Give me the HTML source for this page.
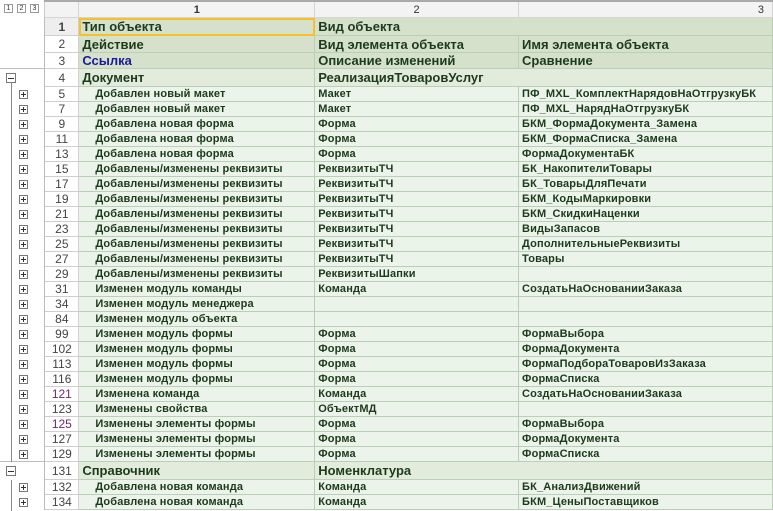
<!DOCTYPE html><html><head><meta charset="utf-8"><style>
body{margin:0;width:773px;height:511px;overflow:hidden;background:#fff;font-family:"Liberation Sans",Arial,sans-serif;position:relative}
table{border-collapse:collapse;table-layout:fixed;position:absolute;left:0;top:0}
td{padding:0;white-space:nowrap;overflow:hidden;color:#1c3b1c;border:1px solid #b9cfb6}
td.o{border:none;border-right:1px solid #bdbdbd;background:#fff;position:relative}
td.n{text-align:center;color:#444;font-size:12px;border:1px solid #cfcfcf;background:#fff}
tr.h td.c{background:#d6e1cc;font-size:13px;font-weight:bold;padding-left:3px}
tr.g td.c{background:#e3ecdc;font-size:13px;font-weight:bold;padding-left:3px}
tr.d td.c{background:#ecf3ea;font-size:11px;font-weight:bold;padding-left:3px;letter-spacing:0.15px}
tr.d td.c1{padding-left:16px}
tr.hd td{background:#f3f3f3;border:1px solid #d5d5d5;border-top:2px solid #aaa;text-align:center;font-size:11px;color:#333;height:15px}
.p{position:absolute;left:19px;top:3px;width:9px;height:9px;border:1px solid #777;background:#fff;box-sizing:border-box}
.p:before{content:"";position:absolute;left:1px;top:3px;width:5px;height:1px;background:#333}
.p:after{content:"";position:absolute;left:3px;top:1px;width:1px;height:5px;background:#333}
.m{position:absolute;left:6px;top:4px;width:10px;height:10px;border:1px solid #777;background:#fff;box-sizing:border-box}
.m:before{content:"";position:absolute;left:1px;top:3.5px;width:6px;height:1px;background:#333}
.vl{position:absolute;left:11px;width:1px;background:#888}
.lv{position:absolute;top:4px;width:9px;height:9px;border:1px solid #999;font-size:7px;line-height:8px;text-align:center;color:#333;box-sizing:border-box;background:#fff}
</style></head><body>
<table>
<colgroup><col style="width:45px"><col style="width:34px"><col style="width:236px"><col style="width:204px"><col style="width:254px"></colgroup>
<tr class="hd"><td style="border:none;border-right:1px solid #ccc;background:#fff"></td><td style="border-left:none"></td><td style="font-weight:bold">1</td><td>2</td><td style="text-align:right;padding-right:8px">3</td></tr>
<tr class="h" style="height:18px"><td class="o"></td><td class="n" style="font-weight:bold;background:#eee">1</td><td class="c" style="outline:2px solid #f5c02a;outline-offset:-2px">Тип объекта</td><td class="c" colspan="2">Вид объекта</td></tr>
<tr class="h" style="height:17px"><td class="o"></td><td class="n">2</td><td class="c">Действие</td><td class="c">Вид элемента объекта</td><td class="c">Имя элемента объекта</td></tr>
<tr class="h" style="height:16px"><td class="o"></td><td class="n">3</td><td class="c" style="color:#1a1a9a">Ссылка</td><td class="c">Описание изменений</td><td class="c">Сравнение</td></tr>
<tr class="g" style="height:18px"><td class="o" style="border-top:1px solid #bdbdbd"><span class="m"></span></td><td class="n">4</td><td class="c">Документ</td><td class="c" colspan="2">РеализацияТоваровУслуг</td></tr>
<tr class="d" style="height:15px"><td class="o"><span class="p"></span></td><td class="n">5</td><td class="c c1">Добавлен новый макет</td><td class="c">Макет</td><td class="c">ПФ_MXL_КомплектНарядовНаОтгрузкуБК</td></tr>
<tr class="d" style="height:15px"><td class="o"><span class="p"></span></td><td class="n">7</td><td class="c c1">Добавлен новый макет</td><td class="c">Макет</td><td class="c">ПФ_MXL_НарядНаОтгрузкуБК</td></tr>
<tr class="d" style="height:15px"><td class="o"><span class="p"></span></td><td class="n">9</td><td class="c c1">Добавлена новая форма</td><td class="c">Форма</td><td class="c">БКМ_ФормаДокумента_Замена</td></tr>
<tr class="d" style="height:15px"><td class="o"><span class="p"></span></td><td class="n">11</td><td class="c c1">Добавлена новая форма</td><td class="c">Форма</td><td class="c">БКМ_ФормаСписка_Замена</td></tr>
<tr class="d" style="height:15px"><td class="o"><span class="p"></span></td><td class="n">13</td><td class="c c1">Добавлена новая форма</td><td class="c">Форма</td><td class="c">ФормаДокументаБК</td></tr>
<tr class="d" style="height:15px"><td class="o"><span class="p"></span></td><td class="n">15</td><td class="c c1">Добавлены/изменены реквизиты</td><td class="c">РеквизитыТЧ</td><td class="c">БК_НакопителиТовары</td></tr>
<tr class="d" style="height:15px"><td class="o"><span class="p"></span></td><td class="n">17</td><td class="c c1">Добавлены/изменены реквизиты</td><td class="c">РеквизитыТЧ</td><td class="c">БК_ТоварыДляПечати</td></tr>
<tr class="d" style="height:15px"><td class="o"><span class="p"></span></td><td class="n">19</td><td class="c c1">Добавлены/изменены реквизиты</td><td class="c">РеквизитыТЧ</td><td class="c">БКМ_КодыМаркировки</td></tr>
<tr class="d" style="height:15px"><td class="o"><span class="p"></span></td><td class="n">21</td><td class="c c1">Добавлены/изменены реквизиты</td><td class="c">РеквизитыТЧ</td><td class="c">БКМ_СкидкиНаценки</td></tr>
<tr class="d" style="height:15px"><td class="o"><span class="p"></span></td><td class="n">23</td><td class="c c1">Добавлены/изменены реквизиты</td><td class="c">РеквизитыТЧ</td><td class="c">ВидыЗапасов</td></tr>
<tr class="d" style="height:15px"><td class="o"><span class="p"></span></td><td class="n">25</td><td class="c c1">Добавлены/изменены реквизиты</td><td class="c">РеквизитыТЧ</td><td class="c">ДополнительныеРеквизиты</td></tr>
<tr class="d" style="height:15px"><td class="o"><span class="p"></span></td><td class="n">27</td><td class="c c1">Добавлены/изменены реквизиты</td><td class="c">РеквизитыТЧ</td><td class="c">Товары</td></tr>
<tr class="d" style="height:15px"><td class="o"><span class="p"></span></td><td class="n">29</td><td class="c c1">Добавлены/изменены реквизиты</td><td class="c">РеквизитыШапки</td><td class="c"></td></tr>
<tr class="d" style="height:15px"><td class="o"><span class="p"></span></td><td class="n">31</td><td class="c c1">Изменен модуль команды</td><td class="c">Команда</td><td class="c">СоздатьНаОснованииЗаказа</td></tr>
<tr class="d" style="height:15px"><td class="o"><span class="p"></span></td><td class="n">34</td><td class="c c1">Изменен модуль менеджера</td><td class="c"></td><td class="c"></td></tr>
<tr class="d" style="height:15px"><td class="o"><span class="p"></span></td><td class="n">84</td><td class="c c1">Изменен модуль объекта</td><td class="c"></td><td class="c"></td></tr>
<tr class="d" style="height:15px"><td class="o"><span class="p"></span></td><td class="n">99</td><td class="c c1">Изменен модуль формы</td><td class="c">Форма</td><td class="c">ФормаВыбора</td></tr>
<tr class="d" style="height:15px"><td class="o"><span class="p"></span></td><td class="n">102</td><td class="c c1">Изменен модуль формы</td><td class="c">Форма</td><td class="c">ФормаДокумента</td></tr>
<tr class="d" style="height:15px"><td class="o"><span class="p"></span></td><td class="n">113</td><td class="c c1">Изменен модуль формы</td><td class="c">Форма</td><td class="c">ФормаПодбораТоваровИзЗаказа</td></tr>
<tr class="d" style="height:15px"><td class="o"><span class="p"></span></td><td class="n">116</td><td class="c c1">Изменен модуль формы</td><td class="c">Форма</td><td class="c">ФормаСписка</td></tr>
<tr class="d" style="height:15px"><td class="o"><span class="p"></span></td><td class="n" style="color:#6a2a6a">121</td><td class="c c1">Изменена команда</td><td class="c">Команда</td><td class="c">СоздатьНаОснованииЗаказа</td></tr>
<tr class="d" style="height:15px"><td class="o"><span class="p"></span></td><td class="n">123</td><td class="c c1">Изменены свойства</td><td class="c">ОбъектМД</td><td class="c"></td></tr>
<tr class="d" style="height:15px"><td class="o"><span class="p"></span></td><td class="n" style="color:#6a2a6a">125</td><td class="c c1">Изменены элементы формы</td><td class="c">Форма</td><td class="c">ФормаВыбора</td></tr>
<tr class="d" style="height:15px"><td class="o"><span class="p"></span></td><td class="n">127</td><td class="c c1">Изменены элементы формы</td><td class="c">Форма</td><td class="c">ФормаДокумента</td></tr>
<tr class="d" style="height:15px"><td class="o"><span class="p"></span></td><td class="n">129</td><td class="c c1">Изменены элементы формы</td><td class="c">Форма</td><td class="c">ФормаСписка</td></tr>
<tr class="g" style="height:18px"><td class="o" style="border-top:1px solid #bdbdbd"><span class="m"></span></td><td class="n">131</td><td class="c">Справочник</td><td class="c" colspan="2">Номенклатура</td></tr>
<tr class="d" style="height:15px"><td class="o"><span class="p"></span></td><td class="n">132</td><td class="c c1">Добавлена новая команда</td><td class="c">Команда</td><td class="c">БК_АнализДвижений</td></tr>
<tr class="d" style="height:15px"><td class="o"><span class="p"></span></td><td class="n">134</td><td class="c c1">Добавлена новая команда</td><td class="c">Команда</td><td class="c">БКМ_ЦеныПоставщиков</td></tr>
</table>
<div class="vl" style="top:82px;height:380px"></div>
<div class="vl" style="top:480px;height:31px"></div>
<div class="lv" style="left:4px">1</div><div class="lv" style="left:17px">2</div><div class="lv" style="left:30px">3</div>
</body></html>
